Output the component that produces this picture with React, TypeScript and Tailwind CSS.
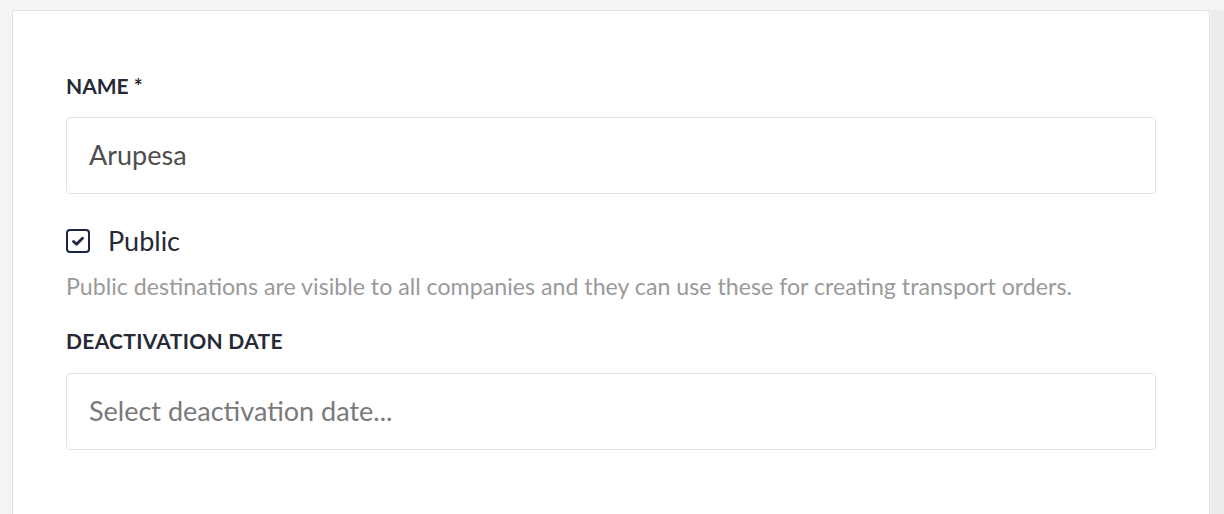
export default function App() {
  return (
    <div className="flex h-[514px] w-full overflow-hidden bg-[#f4f4f4] pt-[10px] pl-3 font-['Lato',sans-serif]">
      <div className="flex-1 rounded-t-[3px] border border-b-0 border-[#e2e2e2] bg-white px-[53px] pt-[63px]">
        <label className="block text-[21px] font-bold leading-6 text-[#262a36]">NAME *</label>
        <div className="mt-[19px] flex h-[77px] items-center rounded-[4px] border border-[#e1e3e6] px-[22px] text-[27px] text-[#4e4e4e]">
          Arupesa
        </div>
        <div className="mt-[35px] flex h-6 items-center gap-[18px]">
          <span className="flex h-6 w-6 items-center justify-center rounded-[4px] border-2 border-[#1d2547]">
            <svg viewBox="0 0 16 16" className="h-4 w-4" fill="none" stroke="#1d2547" strokeWidth="2.8" strokeLinecap="round" strokeLinejoin="round">
              <path d="M3.5 8.5l3 2.8L12.5 5.2" />
            </svg>
          </span>
          <span className="text-[27px] leading-6 text-[#262a36]">Public</span>
        </div>
        <p className="mt-[21px] text-[23.2px] leading-6 text-[#9a9a9a]">
          Public destinations are visible to all companies and they can use these for creating transport orders.
        </p>
        <label className="mt-[31px] block text-[21px] font-bold leading-6 tracking-[0.3px] text-[#262a36]">DEACTIVATION DATE</label>
        <div className="mt-[20px] flex h-[77px] items-center rounded-[4px] border border-[#e1e3e6] px-[22px] text-[27px] text-[#7a7a7a]">
          Select deactivation date...
        </div>
      </div>
      <div className="ml-[1px] w-[13px] bg-[#ececec]" />
    </div>
  );
}
